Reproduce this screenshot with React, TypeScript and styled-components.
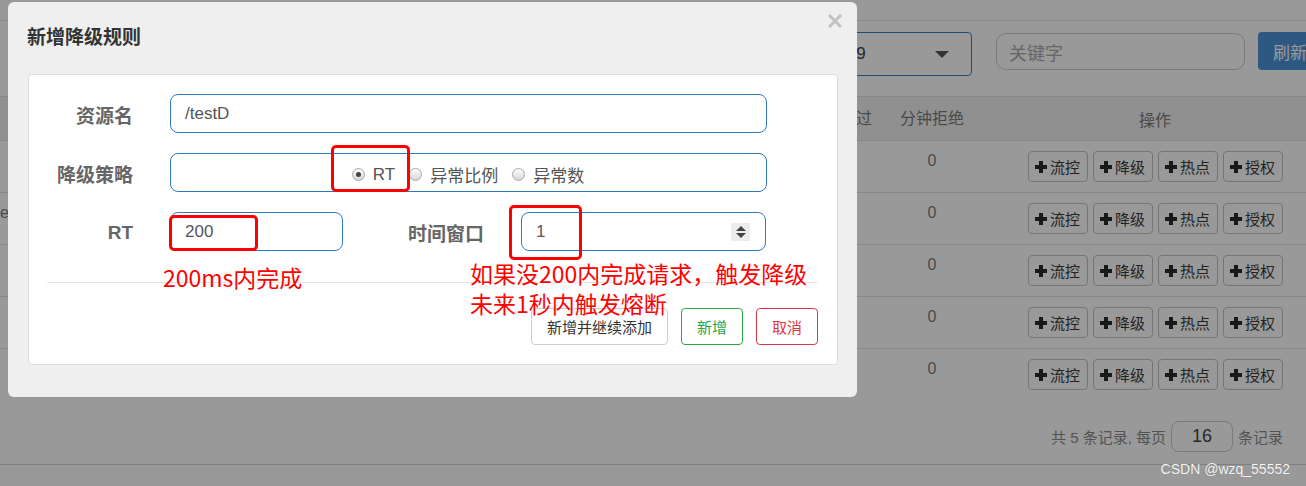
import React from 'react';
import styled, { createGlobalStyle } from 'styled-components';

const GlobalStyle = createGlobalStyle`
	html, body {
		margin: 0;
		padding: 0;
	}
	body {
		width: 1306px;
		height: 486px;
		overflow: hidden;
		background: #fff;
		font-family: 'Liberation Sans', 'Noto Sans CJK SC', sans-serif;
		color: #333;
	}
	* {
		box-sizing: border-box;
	}
`;

const Screen = styled.div`
	position: relative;
	width: 1306px;
	height: 486px;
	overflow: hidden;
`;

/* ---------- page behind the dialog ---------- */

const Page = styled.div`
	display: flex;
	flex-direction: column;
	width: 1306px;
`;

const TopStrip = styled.div`
	height: 21px;
	border-bottom: 1px solid #e4e4e4;
`;

const Toolbar = styled.div`
	display: flex;
	align-items: flex-start;
	height: 75px;
	padding: 11px 0 0 692px;
`;

const Select = styled.div`
	display: flex;
	align-items: center;
	justify-content: space-between;
	flex: none;
	width: 280px;
	height: 44px;
	margin-right: 24px;
	padding: 0 22px 0 12px;
	border: 1px solid #3b7fc0;
	border-radius: 4px;
	font-size: 17px;
	color: #444;
`;

const Caret = styled.span`
	width: 0;
	height: 0;
	border-left: 7px solid transparent;
	border-right: 7px solid transparent;
	border-top: 7px solid #555;
`;

const Keyword = styled.div`
	display: flex;
	align-items: center;
	flex: none;
	width: 249px;
	height: 37px;
	margin: 1px 13px 0 0;
	padding-left: 12px;
	border: 1px solid #ccc;
	border-radius: 10px;
	font-size: 18px;
	color: #aaa;
`;

const RefreshButton = styled.div`
	display: flex;
	align-items: center;
	flex: none;
	width: 70px;
	height: 38px;
	padding-left: 15px;
	border-radius: 4px;
	background: #4a93d8;
	font-size: 17px;
	color: #fff;
`;

const TableRow = styled.div<{ $head?: boolean }>`
	display: grid;
	grid-template-columns: 1fr 96px 88px 330px;
	height: ${({ $head }) => ($head ? '45px' : '52px')};
	border-top: ${({ $head }) => ($head ? '1px solid #e2e2e2' : 'none')};
	border-bottom: 1px solid #dedede;
	background: ${({ $head }) => ($head ? '#f1f1f1' : 'transparent')};
	align-items: ${({ $head }) => ($head ? 'center' : 'start')};
	font-size: 16px;
	color: #7c7c7c;

	&:last-child {
		border-bottom: none;
	}
`;

const Cell = styled.div<{ $align?: 'left' | 'center' }>`
	display: flex;
	justify-content: ${({ $align }) => ($align === 'left' ? 'flex-start' : 'center')};
	line-height: 20px;
	white-space: nowrap;
`;

const BodyCell = styled(Cell)`
	padding-top: 10px;
`;

const ActionCell = styled.div<{ $head?: boolean }>`
	display: flex;
	justify-content: center;
	gap: 5px;
	padding-left: 28px;
	padding-top: ${({ $head }) => ($head ? '0' : '10px')};
`;

const ActionButton = styled.div`
	display: flex;
	align-items: center;
	justify-content: center;
	gap: 3px;
	width: 60px;
	height: 31px;
	border: 1px solid #c4c4c4;
	border-radius: 4px;
	font-size: 15px;
	color: #3a3a3a;
`;

const Pager = styled.div`
	display: flex;
	align-items: center;
	justify-content: flex-end;
	gap: 5px;
	height: 64px;
	padding: 20px 23px 12px 0;
	border-bottom: 1px solid #d6d6d6;
	font-size: 15px;
	color: #8a8a8a;
`;

const PageSize = styled.div`
	display: flex;
	align-items: center;
	justify-content: center;
	width: 62px;
	height: 31px;
	border: 1px solid #ccc;
	border-radius: 8px;
	font-size: 18px;
	color: #444;
`;

const Dim = styled.div`
	position: absolute;
	inset: 0;
	background: rgba(0, 0, 0, 0.4);
`;

const Watermark = styled.div`
	position: absolute;
	right: 16px;
	bottom: 9px;
	font-size: 14px;
	color: #f4f4f4;
	text-shadow: 0 0 1px #777;
`;

/* ---------- dialog ---------- */

const Modal = styled.div`
	position: absolute;
	top: 2px;
	left: 8px;
	width: 849px;
	padding: 0 19px 32px 20px;
	border-radius: 6px;
	background: #efefef;
`;

const ModalHeader = styled.div`
	display: flex;
	align-items: center;
	height: 72px;
	padding: 0 0 6px 0;
`;

const Title = styled.h4`
	margin: 0 0 0 -1px;
	font-size: 19px;
	font-weight: bold;
	color: #333;
`;

const Close = styled.svg`
	position: absolute;
	top: 12px;
	right: 15px;
`;

const Panel = styled.div`
	padding: 19px 19px 19px 18px;
	border: 1px solid #ddd;
	border-radius: 4px;
	background: #fff;
`;

const FormRow = styled.div`
	display: flex;
	align-items: center;
	height: 39px;
	margin-bottom: 20px;

	&:last-of-type {
		margin-bottom: 0;
	}
`;

const Label = styled.label<{ $width: number }>`
	flex: none;
	width: ${({ $width }) => $width}px;
	margin-right: 37px;
	padding-top: 2px;
	text-align: right;
	font-size: 19px;
	font-weight: bold;
	color: #666;
`;

const Field = styled.div<{ $width: number; $center?: boolean }>`
	display: flex;
	align-items: center;
	justify-content: ${({ $center }) => ($center ? 'center' : 'space-between')};
	flex: none;
	width: ${({ $width }) => $width}px;
	height: 39px;
	padding: 0 15px 0 14px;
	border: 1px solid #3079c0;
	border-radius: 8px;
	font-size: 17px;
	color: #555;
`;

const RadioGroup = styled.div`
	display: flex;
	align-items: center;
	gap: 14px;
	padding-top: 4px;
`;

const RadioItem = styled.span`
	display: flex;
	align-items: center;
	gap: 8px;
	font-size: 17px;
	color: #555;
`;

const Radio = styled.span<{ $checked?: boolean }>`
	position: relative;
	width: 13px;
	height: 13px;
	border: 1px solid #a8a8a8;
	border-radius: 50%;
	background: linear-gradient(#fdfdfd, #d6d6d6);

	&::after {
		content: '';
		display: ${({ $checked }) => ($checked ? 'block' : 'none')};
		position: absolute;
		top: 3px;
		left: 3px;
		width: 5px;
		height: 5px;
		border-radius: 50%;
		background: #444;
	}
`;

const Spinner = styled.span`
	display: flex;
	flex-direction: column;
	align-items: center;
	justify-content: center;
	gap: 2px;
	width: 19px;
	height: 18px;
	background: #ececec;
`;

const Arrow = styled.span<{ $up?: boolean }>`
	width: 0;
	height: 0;
	border-left: 5px solid transparent;
	border-right: 5px solid transparent;
	${({ $up }) => ($up ? 'border-bottom: 5px solid #444;' : 'border-top: 5px solid #444;')}
`;

const Divider = styled.div`
	height: 1px;
	margin-top: 31px;
	background: #e5e5e5;
`;

const Footer = styled.div`
	display: flex;
	justify-content: flex-end;
	gap: 13px;
	margin-top: 25px;
`;

const Button = styled.button<{ $tone: 'default' | 'success' | 'danger' }>`
	height: 37px;
	padding: 0 15px;
	border: 1px solid
		${({ $tone }) => ($tone === 'success' ? '#28a745' : $tone === 'danger' ? '#dc3545' : '#ccc')};
	border-radius: 4px;
	background: #fff;
	font-family: 'Liberation Sans', 'Noto Sans CJK SC', sans-serif;
	font-size: 15px;
	color: ${({ $tone }) => ($tone === 'success' ? '#28a745' : $tone === 'danger' ? '#dc3545' : '#333')};
`;

/* ---------- red annotations drawn on top ---------- */

const Mark = styled.div<{ $x: number; $y: number; $w: number; $h: number }>`
	position: absolute;
	left: ${({ $x }) => $x}px;
	top: ${({ $y }) => $y}px;
	width: ${({ $w }) => $w}px;
	height: ${({ $h }) => $h}px;
	border: 3px solid #ff0000;
	border-radius: 5px;
`;

const Note = styled.div<{ $x: number; $y: number }>`
	position: absolute;
	left: ${({ $x }) => $x}px;
	top: ${({ $y }) => $y}px;
	font-family: 'Noto Sans CJK SC', sans-serif;
	font-size: 23px;
	line-height: 30px;
	color: #ff0000;
	white-space: nowrap;
`;

const PlusIcon = () => (
	<svg width="12" height="12" viewBox="0 0 12 12">
		<rect x="4" y="0" width="4" height="12" fill="#2a2a2a" />
		<rect x="0" y="4" width="12" height="4" fill="#2a2a2a" />
	</svg>
);

const actions = ['流控', '降级', '热点', '授权'];
const rows = ['', 'ex', '', '', ''];

const App: React.FC = () => {
	return (
		<Screen>
			<GlobalStyle />
			<Page>
				<TopStrip />
				<Toolbar>
					<Select>
						<span>192.168.10.125:8719</span>
						<Caret />
					</Select>
					<Keyword>关键字</Keyword>
					<RefreshButton>刷新</RefreshButton>
				</Toolbar>
				<div>
					<TableRow $head>
						<Cell $align="left" />
						<Cell>分钟通过</Cell>
						<Cell>分钟拒绝</Cell>
						<ActionCell $head>操作</ActionCell>
					</TableRow>
					{rows.map((name, i) => (
						<TableRow key={i}>
							<BodyCell $align="left">{name}</BodyCell>
							<BodyCell>0</BodyCell>
							<BodyCell>0</BodyCell>
							<ActionCell>
								{actions.map((a) => (
									<ActionButton key={a}>
										<PlusIcon />
										{a}
									</ActionButton>
								))}
							</ActionCell>
						</TableRow>
					))}
				</div>
				<Pager>
					<span>共 5 条记录, 每页</span>
					<PageSize>16</PageSize>
					<span>条记录</span>
				</Pager>
			</Page>
			<Dim />

			<Modal>
				<ModalHeader>
					<Title>新增降级规则</Title>
				</ModalHeader>
				<Close width="14" height="14" viewBox="0 0 14 14">
					<path d="M1 1 L13 13 M13 1 L1 13" stroke="#c2c2c2" strokeWidth="3" />
				</Close>
				<Panel>
					<FormRow>
						<Label $width={86}>资源名</Label>
						<Field $width={597}>/testD</Field>
					</FormRow>
					<FormRow>
						<Label $width={86}>降级策略</Label>
						<Field $width={597} $center>
							<RadioGroup>
								<RadioItem>
									<Radio $checked />
									RT
								</RadioItem>
								<RadioItem>
									<Radio />
									异常比例
								</RadioItem>
								<RadioItem>
									<Radio />
									异常数
								</RadioItem>
							</RadioGroup>
						</Field>
					</FormRow>
					<FormRow>
						<Label $width={86}>RT</Label>
						<Field $width={173}>200</Field>
						<Label $width={141}>时间窗口</Label>
						<Field $width={245}>
							<span>1</span>
							<Spinner>
								<Arrow $up />
								<Arrow />
							</Spinner>
						</Field>
					</FormRow>
					<Divider />
					<Footer>
						<Button $tone="default">新增并继续添加</Button>
						<Button $tone="success">新增</Button>
						<Button $tone="danger">取消</Button>
					</Footer>
				</Panel>
			</Modal>

			<Mark $x={331} $y={145} $w={79} $h={47} />
			<Mark $x={169} $y={215} $w={89} $h={36} />
			<Mark $x={509} $y={205} $w={73} $h={55} />
			<Note $x={163} $y={262}>200ms内完成</Note>
			<Note $x={470} $y={258}>
				如果没200内完成请求，触发降级
				<br />
				未来1秒内触发熔断
			</Note>

			<Watermark>CSDN @wzq_55552</Watermark>
		</Screen>
	);
};

export default App;
